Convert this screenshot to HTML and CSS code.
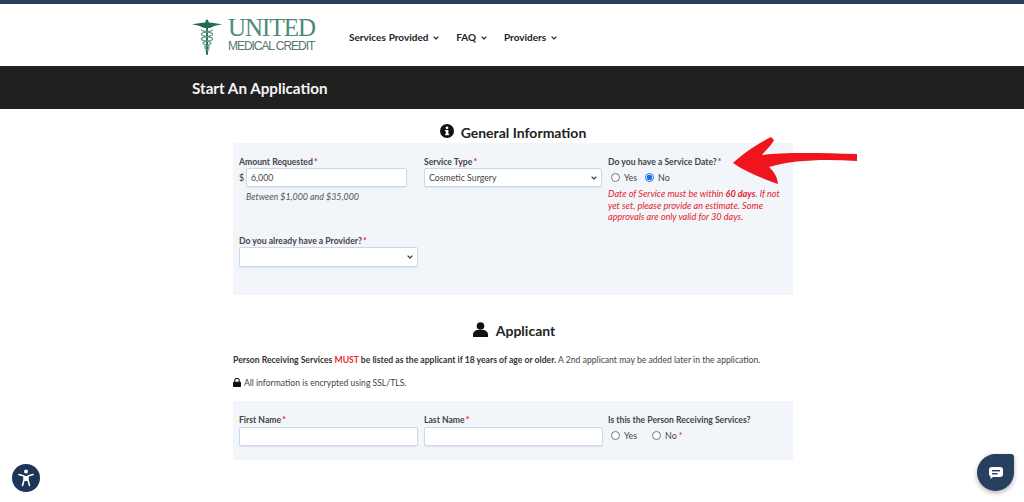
FILE: index.html
```html
<!DOCTYPE html>
<html lang="en">
<head>
<meta charset="utf-8">
<title>Start An Application</title>
<link rel="stylesheet" href="styles.css">
</head>
<body>
<div class="topbar"></div>
<header class="site-header">
  <a class="logo">
    <svg class="logo-mark" width="30" height="40" viewBox="0 0 32 40">
      <path fill="#1f6b55" d="M0 6.500C5 5.500 10 5 14 4.500L15 1.500h2L18 4.500C22 5 27 5.500 32 6.500C27 7.500 24 8 21 9.500C19 10.500 18 10.500 17.500 10.500h-3C14 10.500 13 10.500 11 9.500C8 8 5 7.500 0 6.500Z"/>
      <rect x="15" y="2" width="2" height="37" fill="#1f6b55"/>
      <path fill="none" stroke="#5c9684" stroke-width="1.300" d="M10 12c0 3 12 2 12 5s-12 2-12 5 12 2 10 5-8 2-6 5 4 1 3 3M22 12c0 3-12 2-12 5s12 2 12 5-12 2-10 5 8 2 6 5-4 1-3 3"/>
    </svg>
    <span class="logo-text">
      <span class="logo-united">UNITED</span>
      <span class="logo-credit">MEDICAL CREDIT</span>
    </span>
  </a>
  <nav class="nav">
    <a class="nav-item">Services Provided <svg class="chev" width="6" height="4" viewBox="0 0 6 4"><path d="M.6.6 3 3 5.400.6" fill="none" stroke="#222" stroke-width="1.200"/></svg></a>
    <a class="nav-item">FAQ <svg class="chev" width="6" height="4" viewBox="0 0 6 4"><path d="M.6.6 3 3 5.400.6" fill="none" stroke="#222" stroke-width="1.200"/></svg></a>
    <a class="nav-item">Providers <svg class="chev" width="6" height="4" viewBox="0 0 6 4"><path d="M.6.6 3 3 5.400.6" fill="none" stroke="#222" stroke-width="1.200"/></svg></a>
  </nav>
</header>
<div class="title-bar"><h1>Start An Application</h1></div>

<main class="content">
  <h2 class="section-title first">
    <svg width="14" height="14" viewBox="0 0 14 14"><circle cx="7" cy="7" r="7" fill="#111"/><rect x="5.800" y="6" width="2.600" height="4.600" fill="#fff"/><rect x="5" y="6" width="3" height="1.200" fill="#fff"/><rect x="5" y="10" width="4.200" height="1.200" fill="#fff"/><circle cx="7" cy="3.800" r="1.400" fill="#fff"/></svg>
    General Information
  </h2>
  <section class="panel panel-general">
    <div class="grid">
      <div class="field">
        <label class="lbl">Amount Requested <span class="req">*</span></label>
        <div class="money"><span class="dollar">$</span><input class="input" type="text" value="6,000"></div>
        <p class="hint">Between $1,000 and $35,000</p>
      </div>
      <div class="field">
        <label class="lbl">Service Type <span class="req">*</span></label>
        <select class="input select"><option>Cosmetic Surgery</option></select>
      </div>
      <div class="field">
        <label class="lbl">Do you have a Service Date? <span class="req">*</span></label>
        <div class="radios">
          <label class="radio"><input type="radio" name="date"> Yes</label>
          <label class="radio"><input type="radio" name="date" checked> No</label>
        </div>
        <p class="warn">Date of Service must be within <b>60 days</b>. If not yet set, please provide an estimate. Some approvals are only valid for 30 days.</p>
      </div>
      <div class="field field-provider">
        <label class="lbl">Do you already have a Provider? <span class="req">*</span></label>
        <select class="input select select-wide"><option></option></select>
      </div>
    </div>
  </section>

  <h2 class="section-title second">
    <svg width="15" height="15" viewBox="0 0 15 15"><circle cx="7.500" cy="4" r="3.800" fill="#111"/><path d="M0 15v-2.500C0 9.800 2.500 8 5 8h5c2.500 0 5 1.800 5 4.500V15Z" fill="#111"/></svg>
    Applicant
  </h2>
  <p class="note"><b>Person Receiving Services <span class="must">MUST</span> be listed as the applicant if 18 years of age or older.</b> A 2nd applicant may be added later in the application.</p>
  <p class="secure">
    <svg width="8" height="9" viewBox="0 0 8 9"><path d="M1.800 4V2.500a2.200 2.200 0 0 1 4.400 0V4" fill="none" stroke="#111" stroke-width="1.100"/><rect y="3.800" width="8" height="5.200" rx=".8" fill="#111"/></svg>
    All information is encrypted using SSL/TLS.
  </p>
  <section class="panel panel-applicant">
    <div class="grid">
      <div class="field">
        <label class="lbl">First Name <span class="req">*</span></label>
        <input class="input" type="text">
      </div>
      <div class="field">
        <label class="lbl">Last Name <span class="req">*</span></label>
        <input class="input" type="text">
      </div>
      <div class="field">
        <label class="lbl">Is this the Person Receiving Services?</label>
        <div class="radios wide">
          <label class="radio"><input type="radio" name="person"> Yes</label>
          <label class="radio"><input type="radio" name="person"> No <span class="req">*</span></label>
        </div>
      </div>
    </div>
  </section>
</main>

<svg class="arrow" width="125" height="50" viewBox="0 0 125 50">
  <path fill="#f0141c" d="M0 26C8 18 26 6 38 0L41 3C38 9 32 14 29 18C50 15 90 16 124 17L124 24C90 22 60 23 36 30C40 34 44 38 45 47C32 42 14 36 0 26Z"/>
</svg>

<button class="a11y" aria-label="Accessibility">
  <svg width="22" height="22" viewBox="0 0 22 22"><circle cx="11" cy="4.500" r="2" fill="#fff"/><rect x="9" y="9" width="4" height="5" fill="#fff"/><path d="M4 7.500 9 9v4l-1.500 5.500M18 7.500 13 9v4l1.500 5.500" fill="none" stroke="#fff" stroke-width="1.600" stroke-linecap="round" stroke-linejoin="round"/></svg>
</button>
<button class="chat" aria-label="Chat">
  <svg width="14" height="12" viewBox="0 0 14 12"><path d="M3 0h8a3 3 0 0 1 3 3v4a3 3 0 0 1-3 3H4L1.500 12V9.500A3 3 0 0 1 0 7V3a3 3 0 0 1 3-3Z" fill="#fff"/><rect x="3" y="3" width="8" height="1.400" fill="#27405f"/><rect x="3" y="6" width="5.500" height="1.400" fill="#27405f"/></svg>
</button>
</body>
</html>
```

FILE: styles.css
```css
* { box-sizing: border-box; }
html, body { margin: 0; height: 502px; overflow: hidden; }
body { font-family: Lato, "Liberation Sans", sans-serif; color: #333; background: #fff; position: relative; }
.topbar { height: 4px; background: #2c3e5e; }
.site-header { height: 62px; padding-left: 192px; display: flex; align-items: center; }
.logo { display: flex; align-items: flex-start; width: 157px; height: 40px; margin-top: 4px; }
.logo-mark { flex: none; }
.logo-text { display: flex; flex-direction: column; margin-left: 6px; color: #2f6f5c; }
.logo-united { font-family: "Liberation Serif", serif; font-size: 25px; line-height: 22px; letter-spacing: -1px; color: #4f8a78; white-space: nowrap; }
.logo-credit { font-family: "Liberation Sans", sans-serif; font-size: 12px; line-height: 14px; letter-spacing: -1.050px; color: #56776c; white-space: nowrap; }
.nav { display: flex; gap: 17px; margin-top: 4px; }
.nav-item { font-size: 10px; font-weight: 700; color: #222; white-space: nowrap; word-spacing: .4px; }
.chev { margin-left: 2px; vertical-align: 1px; }
.title-bar { height: 43px; background: #202020; padding-left: 192px; display: flex; align-items: center; }
.title-bar h1 { margin: 0; font-size: 15.200px; font-weight: 700; color: #f4f4f4; }
.content { width: 560px; margin-left: 233px; }
.section-title { margin: 0; display: flex; justify-content: center; align-items: center; gap: 7px; font-size: 14px; font-weight: 700; color: #222; line-height: 18px; }
.section-title svg { position: relative; top: -2px; }
.section-title.first { padding-top: 14px; height: 34px; }
.section-title.second { margin-top: 27px; gap: 8px; padding-left: 2px; }
.panel { background: #f2f5fa; padding: 0 6px; }
.panel-general { height: 152px; padding-top: 13px; }
.panel-applicant { height: 59px; padding-top: 13px; }
.grid { display: grid; grid-template-columns: 185px 184px 1fr; row-gap: 12px; }
.field { min-width: 0; }
.field-provider { grid-column: 1; grid-row: 2; }
.lbl { display: block; font-size: 8.650px; font-weight: 700; line-height: 11px; color: #444; margin-bottom: 2px; white-space: nowrap; }
.panel-general .lbl { margin-bottom: 1px; }
.req { color: #e02a35; margin-left: -1px; }
.input { display: block; width: 179px; height: 19px; border: 1px solid #cbd8ea; border-radius: 2px; background: #fff; padding: 0 4px; font-family: Lato, sans-serif; font-size: 8.750px; color: #444; box-shadow: 0 1px 1px rgba(120,140,170,.15); margin: 0; }
.select { width: 178px; appearance: none; -webkit-appearance: none; background-image: url("data:image/svg+xml,%3Csvg xmlns='http://www.w3.org/2000/svg' width='6' height='4'%3E%3Cpath d='M.6.6 3 3 5.400.6' fill='none' stroke='%23444' stroke-width='1.300'/%3E%3C/svg%3E"); background-repeat: no-repeat; background-position: right 4px center; }
.select-wide { width: 179px; height: 20px; }
.money { display: flex; align-items: center; }
.money .dollar { width: 7px; font-size: 9px; color: #333; }
.money .input { width: 161px; }
.hint { margin: 4px 0 0 7px; font-size: 8.900px; font-style: italic; line-height: 11px; color: #555; }
.radios { display: flex; gap: 8px; height: 15px; align-items: center; padding-left: 3px; margin-top: 3px; }
.radios.wide { gap: 15px; margin-top: 3px; }
.radio { display: flex; align-items: center; gap: 4px; font-size: 8.900px; color: #444; white-space: nowrap; }
.radio input { margin: 0; width: 9px; height: 9px; accent-color: #1a6fe0; }
.radio .req { margin-left: -2px; }
.warn { margin: 3px 0 0; width: 178px; font-size: 9.150px; font-style: italic; line-height: 11.700px; color: #e6222a; }
.note { margin: 14px 0 0; font-size: 8.630px; line-height: 12px; color: #444; white-space: nowrap; }
.note b { color: #333; }
.must { color: #e82c34; }
.secure { margin: 11px 0 12px; font-size: 8.600px; line-height: 12px; color: #444; display: flex; align-items: center; gap: 3px; }
.secure svg { position: relative; top: -1px; }
.arrow { position: absolute; left: 733px; top: 137px; }
.a11y { position: fixed; left: 12px; top: 464px; width: 28px; height: 28px; border: 0; padding: 0; border-radius: 50%; background: #1d3557; display: flex; align-items: center; justify-content: center; }
.chat { position: fixed; left: 977px; top: 454px; width: 37px; height: 37px; border: 0; padding: 0; border-radius: 50% 3px 50% 50%; background: #27405f; box-shadow: 0 2px 5px rgba(0,0,0,.3); display: flex; align-items: center; justify-content: center; }
```
